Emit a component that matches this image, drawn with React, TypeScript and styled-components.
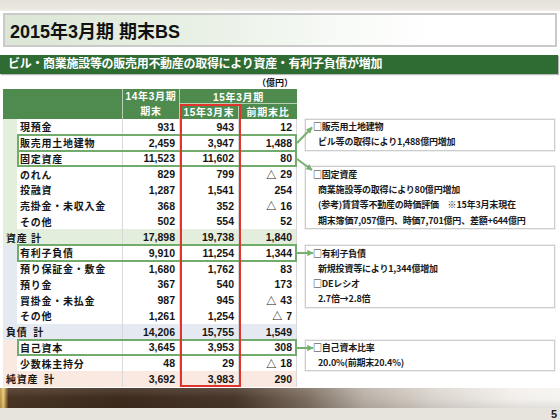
import React from "react";
import styled, { createGlobalStyle } from "styled-components";

const GlobalStyle = createGlobalStyle`
  html, body { margin: 0; padding: 0; background: #ffffff; }
  body {
    width: 560px;
    height: 420px;
    overflow: hidden;
    font-family: "Liberation Sans", "Noto Sans CJK JP", sans-serif;
  }
`;

const ROW_H = 15.75;
const CJK = `"Noto Sans CJK JP", "Liberation Sans", sans-serif`;

type Tone = "asset" | "liab" | "equity";
const toneColor: Record<Tone, string> = {
  asset: "#e4eedc",
  liab: "#e5e9f1",
  equity: "#f9e9e1",
};

interface RowData {
  label: string;
  a: string;
  b: string;
  c: string;
  tone: Tone;
  total?: boolean;
}

const rows: RowData[] = [
  { label: "現預金", a: "931", b: "943", c: "12", tone: "asset" },
  { label: "販売用土地建物", a: "2,459", b: "3,947", c: "1,488", tone: "asset" },
  { label: "固定資産", a: "11,523", b: "11,602", c: "80", tone: "asset" },
  { label: "のれん", a: "829", b: "799", c: "△ 29", tone: "asset" },
  { label: "投融資", a: "1,287", b: "1,541", c: "254", tone: "asset" },
  { label: "売掛金・未収入金", a: "368", b: "352", c: "△ 16", tone: "asset" },
  { label: "その他", a: "502", b: "554", c: "52", tone: "asset" },
  { label: "資産 計", a: "17,898", b: "19,738", c: "1,840", tone: "asset", total: true },
  { label: "有利子負債", a: "9,910", b: "11,254", c: "1,344", tone: "liab" },
  { label: "預り保証金・敷金", a: "1,680", b: "1,762", c: "83", tone: "liab" },
  { label: "預り金", a: "367", b: "540", c: "173", tone: "liab" },
  { label: "買掛金・未払金", a: "987", b: "945", c: "△ 43", tone: "liab" },
  { label: "その他", a: "1,261", b: "1,254", c: "△ 7", tone: "liab" },
  { label: "負債\u2002計", a: "14,206", b: "15,755", c: "1,549", tone: "liab", total: true },
  { label: "自己資本", a: "3,645", b: "3,953", c: "308", tone: "equity" },
  { label: "少数株主持分", a: "48", b: "29", c: "△ 18", tone: "equity" },
  { label: "純資産\u2002計", a: "3,692", b: "3,983", c: "290", tone: "equity", total: true },
];

const highlighted = [1, 2, 8, 14];

interface NoteLine {
  text: string;
  indent?: boolean;
}
interface NoteData {
  start: number;
  lines: NoteLine[];
}

const notes: NoteData[] = [
  {
    start: 0,
    lines: [
      { text: "□販売用土地建物" },
      { text: "ビル等の取得により1,488億円増加", indent: true },
    ],
  },
  {
    start: 3,
    lines: [
      { text: "□固定資産" },
      { text: "商業施設等の取得により80億円増加", indent: true },
      { text: "(参考)賃貸等不動産の時価評価\u2003※15年3月末現在", indent: true },
      { text: "期末簿価7,057億円、時価7,701億円、差額+644億円", indent: true },
    ],
  },
  {
    start: 8,
    lines: [
      { text: "□有利子負債" },
      { text: "新規投資等により1,344億増加", indent: true },
      { text: "□DEレシオ" },
      { text: "2.7倍→2.8倍", indent: true },
    ],
  },
  {
    start: 14,
    lines: [
      { text: "□自己資本比率" },
      { text: "20.0%(前期末20.4%)", indent: true },
    ],
  },
];

const Slide = styled.div`
  width: 560px;
  height: 420px;
  display: flex;
  flex-direction: column;
  background: #ffffff;
  overflow: hidden;
`;

const TopStrip = styled.div`
  flex: 0 0 11px;
  margin-bottom: 2px;
  background: linear-gradient(180deg, #e6e1da 0%, #ebe7e1 80%, #f3f1ed 100%);
`;

const TitleBox = styled.div`
  flex: 0 0 34px;
  box-sizing: border-box;
  margin: 0 3px;
  border: 2px solid #cacaca;
  background: linear-gradient(90deg, #dbe6d5 0%, #e9f0e5 35%, #f7faf6 60%, #ffffff 78%);
  display: flex;
  align-items: center;
  padding-left: 5px;
`;

const Title = styled.h1`
  margin: 0;
  font-size: 18px;
  font-weight: bold;
  color: #111111;
`;

const Banner = styled.div`
  flex: 0 0 19px;
  box-sizing: border-box;
  margin-top: 8px;
  width: 558px;
  background: #2f6c33;
  box-shadow: 1px 1px 1px #b8b8b8;
  color: #ffffff;
  font-size: 12px;
  font-weight: bold;
  line-height: 19px;
  padding-left: 8px;
  letter-spacing: -0.3px;
  white-space: nowrap;
`;

const Content = styled.div`
  flex: 0 0 314px;
  position: relative;
  display: flex;
  padding-left: 3px;
`;

const TableCol = styled.div`
  width: 294px;
  display: flex;
  flex-direction: column;
`;

const Unit = styled.div`
  height: 15px;
  display: flex;
  align-items: flex-end;
  justify-content: flex-end;
  padding-right: 4px;
  font-size: 9px;
  font-weight: bold;
  color: #111111;
  line-height: 12px;
`;

const COLS = "120px 57px 59px 58px";

const Head = styled.div`
  display: grid;
  grid-template-columns: ${COLS};
  grid-template-rows: 15px 15px;
  background: #4f8b4e;
  color: #ffffff;
  font-size: 10px;
  font-weight: bold;
  letter-spacing: 0.75px;
`;

const HeadCell = styled.div<{ $col: string; $row: string; $divR?: boolean; $divB?: boolean }>`
  grid-column: ${(p) => p.$col};
  grid-row: ${(p) => p.$row};
  display: flex;
  flex-direction: column;
  align-items: center;
  justify-content: center;
  border-right: ${(p) => (p.$divR ? "1px solid #b7d0b4" : "none")};
  border-bottom: ${(p) => (p.$divB ? "1px solid #b7d0b4" : "none")};
  white-space: nowrap;
`;

const HeadLine = styled.span`
  height: 15px;
  line-height: 15px;
`;

const Body = styled.div`
  position: relative;
`;

const Row = styled.div<{ $tone: Tone; $total?: boolean }>`
  display: grid;
  grid-template-columns: ${COLS};
  height: ${ROW_H}px;
  background: ${(p) => (p.$total ? toneColor[p.$tone] : "#ffffff")};
  font-size: 10px;
  font-weight: bold;
  color: #151515;
`;

const Label = styled.div<{ $tone: Tone; $total?: boolean }>`
  display: flex;
  align-items: center;
  padding-left: ${(p) => (p.$total ? "3px" : "17px")};
  background: ${(p) =>
    p.$total ? "transparent" : `linear-gradient(90deg, ${toneColor[p.$tone]} 0 14px, transparent 14px)`};
  border-right: 1px solid #d8d8d8;
  letter-spacing: 0.75px;
  white-space: nowrap;
`;

const Num = styled.div`
  display: flex;
  align-items: center;
  justify-content: flex-end;
  padding-right: 4px;
  border-right: 1px solid #d8d8d8;
  font-size: 10.5px;
  white-space: nowrap;
`;

const Tri = styled.span`
  font-family: ${CJK};
  font-size: 10px;
  margin-right: 4px;
`;

const RedFrame = styled.div`
  position: absolute;
  box-sizing: border-box;
  left: 177px;
  width: 61px;
  top: -15px;
  bottom: 0;
  border: 2px solid #e0342c;
  pointer-events: none;
`;

const GreenFrame = styled.div`
  position: absolute;
  box-sizing: border-box;
  left: 14px;
  right: 0;
  height: ${ROW_H + 2}px;
  border: 2px solid #72ac6c;
  pointer-events: none;
`;

const Notes = styled.div`
  margin-left: 8px;
  margin-top: 45px;
  width: 250px;
  display: grid;
  grid-template-rows: repeat(17, ${ROW_H}px);
`;

const Note = styled.div<{ $start: number; $span: number }>`
  grid-row: ${(p) => `${p.$start + 1} / span ${p.$span}`};
  box-sizing: border-box;
  border: 1px solid #cdcdcd;
  box-shadow: 0 0 0 1px #efefef;
  background: #ffffff;
  display: grid;
  grid-auto-rows: 1fr;
  align-items: center;
  padding-left: 7px;
`;

const NoteText = styled.div<{ $indent?: boolean }>`
  padding-left: ${(p) => (p.$indent ? "5px" : "0")};
  font-family: ${CJK};
  font-size: 9px;
  font-weight: bold;
  color: #1a1a1a;
  letter-spacing: -0.2px;
  white-space: nowrap;
  line-height: 12px;
`;

const Arrows = styled.svg`
  position: absolute;
  left: 294px;
  top: 0;
  width: 22px;
  height: 314px;
  overflow: visible;
  pointer-events: none;
`;

const FooterBar = styled.div`
  flex: 0 0 20px;
  height: 20px;
  background-color: #3d2b1d;
  background-image: linear-gradient(180deg, rgba(255, 255, 255, 0.12) 0%, rgba(255, 255, 255, 0) 50%, rgba(0, 0, 0, 0.08) 100%), linear-gradient(90deg, #b88e40 0%, #e8cc78 0.6%, #9a7438 1.1%, #4a3524 1.5%, #3d2b1d 22%, #48362a 42%, #7e6f62 55%, #b9b0a6 65%, #dcd6cf 78%, #f3f0ec 92%, #f6f4f1 100%);
`;

const FooterStrip = styled.div`
  flex: 0 0 12px;
  background: #e7e3dd;
  display: flex;
  align-items: center;
  justify-content: flex-end;
  padding-right: 3px;
`;

const PageNo = styled.span`
  font-size: 11px;
  font-weight: bold;
  color: #222222;
  line-height: 12px;
`;

function Value({ v }: { v: string }) {
  if (v.startsWith("△")) {
    return (
      <Num>
        <Tri>△</Tri>
        {v.slice(2)}
      </Num>
    );
  }
  return <Num>{v}</Num>;
}

function ArrowLayer() {
  const c = "#76b06f";
  return (
    <Arrows viewBox="294 74 22 314">
      <defs>
        <marker id="ah" viewBox="0 0 10 10" refX="9" refY="5" markerWidth="3.2" markerHeight="3.2" orient="auto">
          <path d="M0 0 L10 5 L0 10 Z" fill={c} />
        </marker>
      </defs>
      <line x1="297" y1="143" x2="312" y2="127.5" stroke={c} strokeWidth="2" markerEnd="url(#ah)" />
      <line x1="297" y1="159" x2="312" y2="170" stroke={c} strokeWidth="2" markerEnd="url(#ah)" />
      <line x1="297" y1="253" x2="313" y2="253" stroke={c} strokeWidth="2" markerEnd="url(#ah)" />
      <line x1="297" y1="348" x2="313" y2="348" stroke={c} strokeWidth="2" markerEnd="url(#ah)" />
    </Arrows>
  );
}

export default function App() {
  return (
    <>
      <GlobalStyle />
      <Slide>
        <TopStrip />
        <TitleBox>
          <Title>2015年3月期 期末BS</Title>
        </TitleBox>
        <Banner>ビル・商業施設等の販売用不動産の取得により資産・有利子負債が増加</Banner>
        <Content>
          <TableCol>
            <Unit>（億円）</Unit>
            <Head>
              <HeadCell $col="1" $row="1 / 3" $divR />
              <HeadCell $col="2" $row="1 / 3" $divR>
                <HeadLine>14年3月期</HeadLine>
                <HeadLine>期末</HeadLine>
              </HeadCell>
              <HeadCell $col="3 / 5" $row="1" $divB>
                15年3月期
              </HeadCell>
              <HeadCell $col="3" $row="2" $divR>
                15年3月末
              </HeadCell>
              <HeadCell $col="4" $row="2">
                前期末比
              </HeadCell>
            </Head>
            <Body>
              {rows.map((r, i) => (
                <Row key={i} $tone={r.tone} $total={r.total}>
                  <Label $tone={r.tone} $total={r.total}>
                    {r.label}
                  </Label>
                  <Value v={r.a} />
                  <Value v={r.b} />
                  <Value v={r.c} />
                </Row>
              ))}
              {highlighted.map((i) => (
                <GreenFrame key={i} style={{ top: i * ROW_H - 1 }} />
              ))}
              <RedFrame />
            </Body>
          </TableCol>
          <Notes>
            {notes.map((n, i) => (
              <Note key={i} $start={n.start} $span={n.lines.length}>
                {n.lines.map((l, j) => (
                  <NoteText key={j} $indent={l.indent}>
                    {l.text}
                  </NoteText>
                ))}
              </Note>
            ))}
          </Notes>
          <ArrowLayer />
        </Content>
        <FooterBar />
        <FooterStrip>
          <PageNo>5</PageNo>
        </FooterStrip>
      </Slide>
    </>
  );
}
